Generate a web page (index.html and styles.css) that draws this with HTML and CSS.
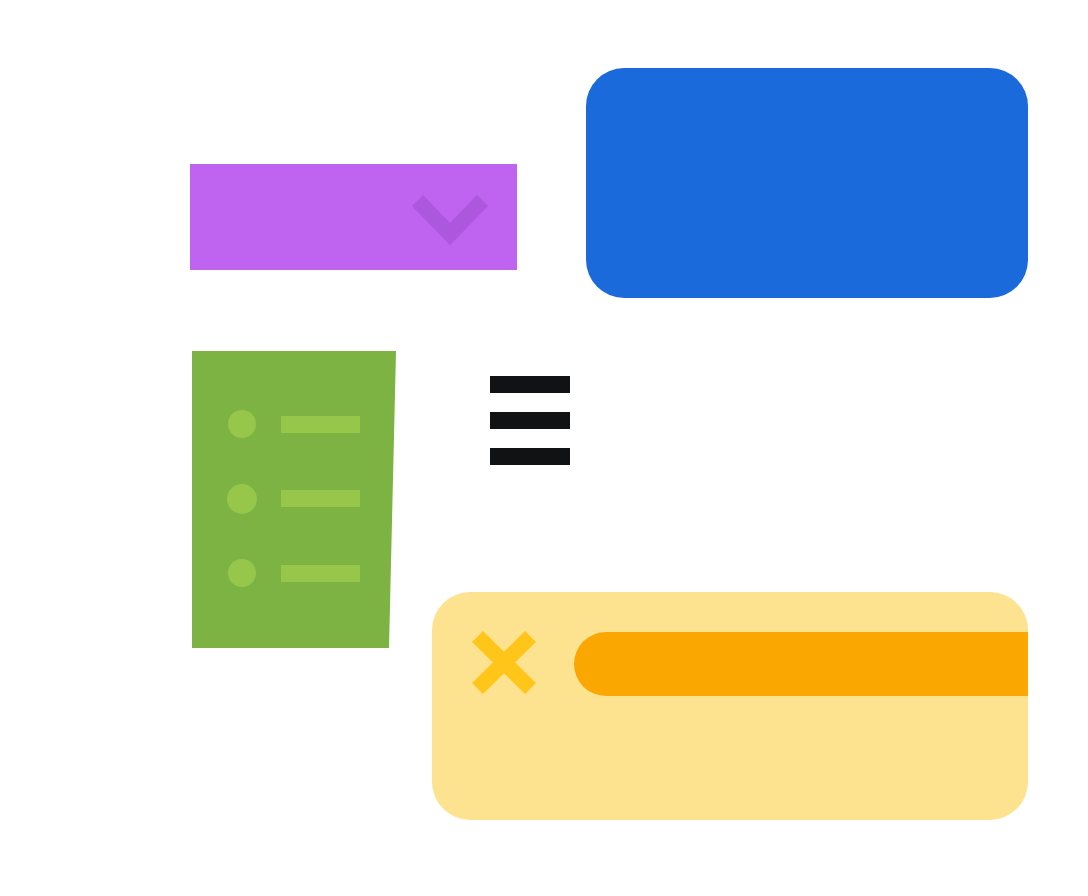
FILE: index.html
```html
<!DOCTYPE html>
<html lang="en">
<head>
<meta charset="utf-8">
<title>UI shapes</title>
<link rel="stylesheet" href="styles.css">
</head>
<body>
<div class="canvas">
  <div class="dropdown">
    <svg class="chevron" width="80" height="56" viewBox="0 0 80 56" aria-hidden="true">
      <polyline points="7.5,8.5 40,42 72.5,8.5" fill="none" stroke="#ad57de" stroke-width="15.5" stroke-linejoin="miter" stroke-linecap="butt"/>
    </svg>
  </div>

  <div class="panel"></div>

  <div class="list">
    <div class="row"><span class="dot-cell"><span class="dot"></span></span><span class="bar"></span></div>
    <div class="row"><span class="dot-cell"><span class="dot dot-lg"></span></span><span class="bar"></span></div>
    <div class="row"><span class="dot-cell"><span class="dot"></span></span><span class="bar"></span></div>
  </div>

  <div class="menu">
    <span class="line"></span>
    <span class="line"></span>
    <span class="line"></span>
  </div>

  <div class="alert">
    <div class="alert-row">
      <svg class="close" width="64" height="64" viewBox="0 0 64 64" aria-hidden="true">
        <line x1="5.5" y1="6.5" x2="58.5" y2="58.5" stroke="#ffc519" stroke-width="15.5"/>
        <line x1="58.5" y1="6.5" x2="5.5" y2="58.5" stroke="#ffc519" stroke-width="15.5"/>
      </svg>
      <div class="pill"></div>
    </div>
  </div>
</div>
</body>
</html>
```

FILE: styles.css
```css
html, body {
  margin: 0;
  padding: 0;
  background: #ffffff;
  font-family: "Liberation Sans", Arial, sans-serif;
}

.canvas {
  position: relative;
  width: 1088px;
  height: 896px;
  overflow: hidden;
}

/* purple dropdown */
.dropdown {
  position: absolute;
  left: 190px;
  top: 164px;
  width: 327px;
  height: 106px;
  background: #bf64f0;
  display: flex;
  align-items: flex-start;
  padding: 28px 0 0 220px;
  box-sizing: border-box;
}
.chevron { display: block; }

/* blue panel */
.panel {
  position: absolute;
  left: 586px;
  top: 68px;
  width: 442px;
  height: 230px;
  background: #1a6adb;
  border-radius: 38px;
}

/* green list */
.list {
  position: absolute;
  left: 192px;
  top: 351px;
  width: 204px;
  height: 297px;
  background: #7cb342;
  clip-path: polygon(0 0, 100% 0, 96.57% 100%, 0 100%);
  display: flex;
  flex-direction: column;
  gap: 44.5px;
  padding: 58px 0 0 35px;
  box-sizing: border-box;
}
.row {
  display: flex;
  align-items: center;
  gap: 24px;
  height: 30px;
}
.dot-cell {
  width: 30px;
  height: 30px;
  display: flex;
  align-items: center;
  justify-content: center;
}
.dot {
  width: 28px;
  height: 28px;
  border-radius: 50%;
  background: #96c74a;
}
.dot-lg {
  width: 30px;
  height: 30px;
}
.bar {
  width: 79px;
  height: 17px;
  background: #96c74a;
}

/* hamburger */
.menu {
  position: absolute;
  left: 490px;
  top: 376px;
  width: 80px;
  display: flex;
  flex-direction: column;
  gap: 19px;
}
.line {
  display: block;
  height: 17px;
  background: #111213;
}

/* yellow alert */
.alert {
  position: absolute;
  left: 432px;
  top: 592px;
  width: 596px;
  height: 228px;
  background: #fde38f;
  border-radius: 38px;
  padding: 40px 0 0 40px;
  box-sizing: border-box;
}
.alert-row {
  display: flex;
  align-items: flex-start;
  gap: 38px;
}
.close {
  display: block;
  flex: none;
  margin-top: -2px;
}
.pill {
  flex: 1;
  height: 64px;
  background: #fba702;
  border-radius: 32px 0 0 32px;
}
```
